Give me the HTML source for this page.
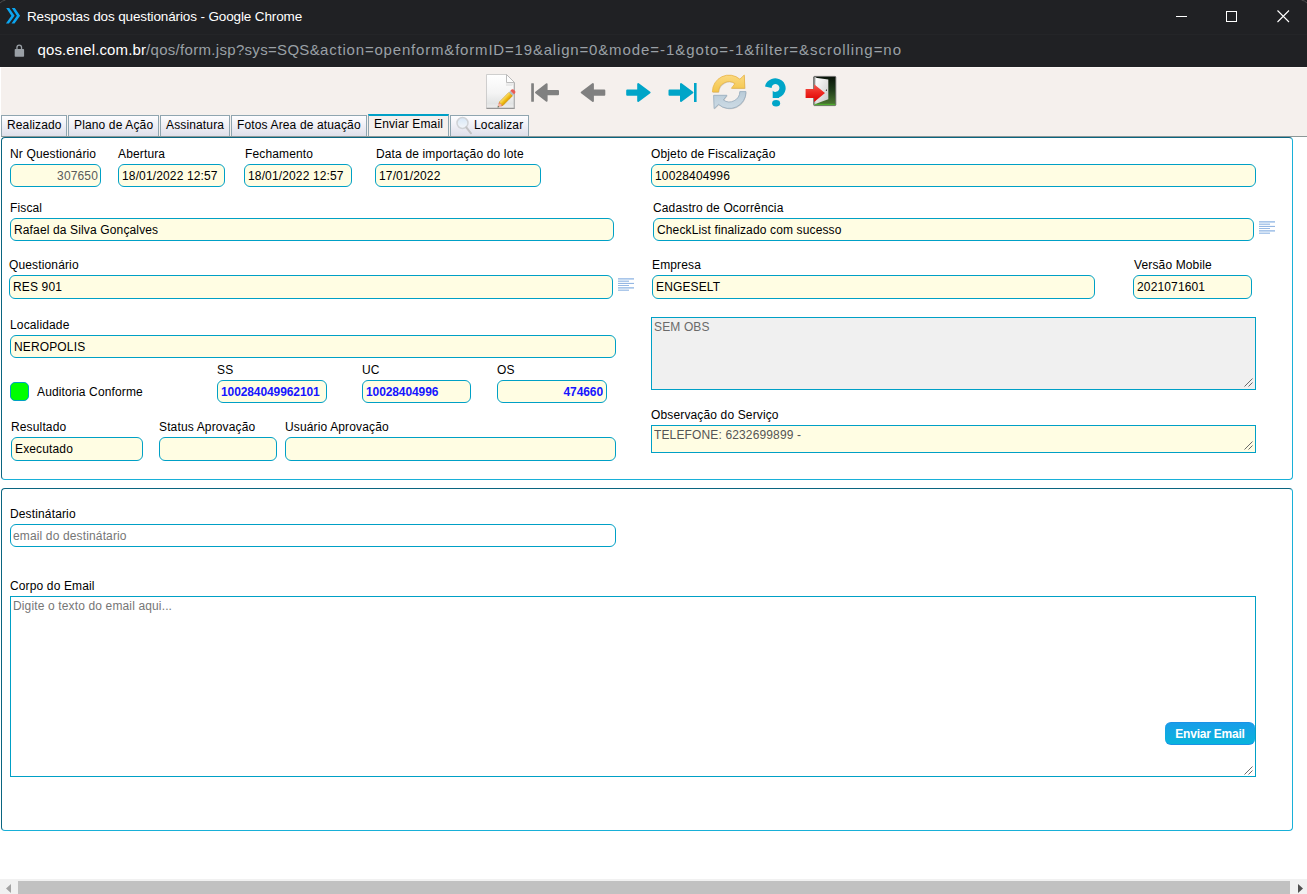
<!DOCTYPE html><html><head><meta charset="utf-8"><style>
*{margin:0;padding:0;box-sizing:border-box}
html,body{width:1307px;height:894px;overflow:hidden;background:#fff;font-family:"Liberation Sans",sans-serif}
.t{position:absolute;white-space:nowrap;line-height:14px;font-size:12px;letter-spacing:0.14px}
.in{position:absolute;border:1px solid #00a0c6;background:#fffde3}
.it{position:absolute;white-space:nowrap;line-height:14px;font-size:12px;overflow:hidden;letter-spacing:0.14px}
.tab{position:absolute;top:115px;height:21px;border:1px solid #8fa5b0;border-bottom:none;background:linear-gradient(#fdfdff,#dfdfea);font-size:12px;line-height:14px;color:#000}
.tab span{position:absolute;top:2px;white-space:nowrap;letter-spacing:0.14px}
</style></head><body>
<div style="position:absolute;left:0;top:0;width:1307px;height:34px;background:#202124"></div>
<div style="position:absolute;left:0;top:34px;width:1307px;height:33px;background:#202124"></div>
<div style="position:absolute;left:0;top:34px;width:1307px;height:1px;background:#242528"></div>
<svg style="position:absolute;left:0;top:0" width="30" height="34"><g fill="#0ba5f0"><path d="M6.2 8.1 H9.2 L14.6 15.7 L8.9 23.6 H5.9 L11.4 15.7 Z"/><path d="M11.8 8.1 H14.8 L20.1 15.7 L14.5 23.6 H11.5 L16.9 15.7 Z"/></g></svg>
<div class="t" style="left:27px;top:9px;font-size:13.5px;line-height:16px;color:#fff;letter-spacing:-0.13px">Respostas dos questionários - Google Chrome</div>
<svg style="position:absolute;left:0;top:0" width="8" height="6"><path d="M0 3 Q2 0.8 5.5 0" fill="none" stroke="#4a4a4c" stroke-width="1"/></svg>
<svg style="position:absolute;left:1299px;top:0" width="8" height="6"><path d="M8 3 Q6 0.8 2.5 0" fill="none" stroke="#4a4a4c" stroke-width="1"/></svg>
<div style="position:absolute;left:1176px;top:16px;width:11px;height:1px;background:#fff"></div>
<div style="position:absolute;left:1226px;top:11px;width:11px;height:11px;border:1px solid #fff"></div>
<svg style="position:absolute;left:1270px;top:4px" width="26" height="26"><path d="M7.5 6.5 L19 18 M19 6.5 L7.5 18" stroke="#fff" stroke-width="1.1"/></svg>
<svg style="position:absolute;left:10px;top:40px" width="20" height="20"><path d="M6.95 9.5 V7.45 A2.3 2.3 0 0 1 11.55 7.45 V9.5" fill="none" stroke="#9aa0a6" stroke-width="1.3"/><rect x="4.7" y="9" width="9.4" height="7.7" rx="0.8" fill="#9aa0a6"/></svg>
<div class="t" style="left:37.5px;top:41px;font-size:15px;line-height:18px;color:#fff;letter-spacing:0.118px">qos.enel.com.br</div>
<div class="t" style="left:146px;top:41px;font-size:15px;line-height:18px;color:#9aa0a6;letter-spacing:0.311px">/qos/form.jsp?sys=SQS&amp;</div>
<div class="t" style="left:320px;top:41px;font-size:15px;line-height:18px;color:#9aa0a6;letter-spacing:0.811px">action=openform&amp;formID=19&amp;align=0&amp;</div>
<div class="t" style="left:609px;top:41px;font-size:15px;line-height:18px;color:#9aa0a6;letter-spacing:0.958px">mode=-1&amp;goto=-1&amp;filter=&amp;scrolling=no</div>
<div style="position:absolute;left:0;top:67px;width:1307px;height:69px;background:#f5f0ed"></div>
<div style="position:absolute;left:0;top:67px;width:1307px;height:1px;background:#fcf8f5"></div>
<div style="position:absolute;left:0;top:67px;width:1px;height:70px;background:#fff"></div>
<div style="position:absolute;left:1px;top:136px;width:1306px;height:1px;background:#8c9797"></div>
<svg style="position:absolute;left:480px;top:70px" width="370" height="45" viewBox="480 70 370 45">
<defs>
<linearGradient id="pg" x1="0" y1="0" x2="0" y2="1"><stop offset="0" stop-color="#ffffff"/><stop offset="0.55" stop-color="#f4f4f4"/><stop offset="0.85" stop-color="#e2e4e4"/><stop offset="1" stop-color="#eeeeee"/></linearGradient>
<linearGradient id="pen" x1="0" y1="0" x2="0" y2="1"><stop offset="0" stop-color="#fbe27a"/><stop offset="0.5" stop-color="#f2c21c"/><stop offset="1" stop-color="#d99a00"/></linearGradient>
<linearGradient id="yl" x1="0" y1="0" x2="0" y2="1"><stop offset="0" stop-color="#fbd980"/><stop offset="1" stop-color="#f3c54a"/></linearGradient>
<linearGradient id="bl" x1="0" y1="0" x2="0" y2="1"><stop offset="0" stop-color="#b9cbd8"/><stop offset="1" stop-color="#cddbe5"/></linearGradient>
<linearGradient id="dr" x1="0" y1="0" x2="0" y2="1"><stop offset="0" stop-color="#081208"/><stop offset="0.45" stop-color="#1e3a1a"/><stop offset="1" stop-color="#4f7d33"/></linearGradient>
<linearGradient id="door" x1="0" y1="0" x2="1" y2="1"><stop offset="0" stop-color="#ffffff"/><stop offset="1" stop-color="#c8c8c8"/></linearGradient>
<linearGradient id="red" x1="0" y1="0" x2="0" y2="1"><stop offset="0" stop-color="#f25a50"/><stop offset="0.45" stop-color="#ee2a22"/><stop offset="1" stop-color="#dc0000"/></linearGradient>
<filter id="sh" x="-20%" y="-20%" width="140%" height="140%"><feGaussianBlur stdDeviation="0.6"/></filter>
</defs>
<!-- doc -->
<path d="M487 75 H507 L515 83 V109 H487 Z" fill="#9a9a9a" opacity="0.55" filter="url(#sh)"/>
<path d="M486.5 74.5 H506.5 L514.5 82.5 V108.5 H486.5 Z" fill="url(#pg)" stroke="#c4c4c4" stroke-width="0.8"/>
<path d="M486.5 108.3 H514.5" stroke="#8c8c8c" stroke-width="1.1"/>
<path d="M514.2 83 V108.5" stroke="#a9a9a9" stroke-width="1"/>
<path d="M506.5 74.5 V82.5 H514.5 Z" fill="#fdfdfd" stroke="#b4b4b4" stroke-width="0.9" stroke-linejoin="round"/>
<path d="M505.8 83.3 H514 L512 86 H506 Z" fill="#e4e4e4" opacity="0.8"/>
<g transform="translate(497.6,107.4) rotate(-45.5)">
<path d="M0 0 L1.6 -1 L1.6 1 Z" fill="#2c4a2c"/>
<path d="M1.4 -1.2 L5 -2.5 V2.5 L1.4 1.2 Z" fill="#f1b4a0"/>
<path d="M3.2 -1.9 L5 -2.5 V-1 Z" fill="#e06050"/>
<path d="M3.2 1.9 L5 2.5 V1 Z" fill="#e06050"/>
<rect x="5" y="-2.5" width="13.8" height="5" fill="url(#pen)" stroke="#cf9200" stroke-width="0.5"/>
<rect x="18.8" y="-2.5" width="2" height="5" fill="#b4bcbc"/>
<path d="M20.8 -2.5 H22.5 Q24 -2.5 24 0 Q24 2.5 22.5 2.5 H20.8 Z" fill="#ea5a52"/>
</g>
<!-- first -->
<rect x="531.2" y="83.2" width="2.7" height="18.6" rx="0.5" fill="#808080"/>
<path d="M536 92.5 L546.6 84.2 V90.9 H558 V94.3 H546.6 V100.8 Z" fill="#808080" stroke="#808080" stroke-width="2" stroke-linejoin="round"/>
<!-- prev -->
<path d="M581.7 92.5 L592.9 84 V90.4 H604.3 V94.7 H592.9 V100.9 Z" fill="#808080" stroke="#808080" stroke-width="2" stroke-linejoin="round"/>
<!-- next -->
<path d="M649.6 92.5 L638.2 84 V90.4 H627.2 V94.7 H638.2 V100.9 Z" fill="#00a5c8" stroke="#00a5c8" stroke-width="2" stroke-linejoin="round"/>
<!-- last -->
<path d="M692.4 92.5 L681 84 V90.4 H669.5 V94.7 H681 V100.9 Z" fill="#00a5c8" stroke="#00a5c8" stroke-width="2" stroke-linejoin="round"/>
<rect x="694" y="83" width="2.6" height="19" fill="#00a5c8"/>
<!-- refresh -->
<g filter="url(#sh)" opacity="0.35"><path d="M712.9 92.8 A16.6 16.6 0 0 1 740.4 80 L744.8 75.8 L745.3 89.1 L731.9 89.1 L735.5 84.4 A10.4 10.4 0 0 0 719.1 92.8 Z" fill="#888"/><path d="M746.5 92.4 A16.6 16.6 0 0 1 719 105.2 L714.6 109.4 L714.1 96.1 L727.5 96.1 L723.9 100.8 A10.4 10.4 0 0 0 740.3 92.4 Z" fill="#888"/></g>
<path d="M712.4 92 A16.6 16.6 0 0 1 739.9 79.2 L744.3 75 L744.8 88.3 L731.4 88.3 L735 83.6 A10.4 10.4 0 0 0 718.6 92 Z" fill="url(#yl)" stroke="#e9b444" stroke-width="0.8" stroke-linejoin="round"/>
<path d="M746 91.6 A16.6 16.6 0 0 1 718.5 104.4 L714.1 108.6 L713.6 95.3 L727 95.3 L723.4 100 A10.4 10.4 0 0 0 739.8 91.6 Z" fill="url(#bl)" stroke="#94aabb" stroke-width="0.8" stroke-linejoin="round"/>
<!-- help -->
<path d="M765 86.5 A10.4 9.9 0 1 1 779 97.4 L779 98.1 L772.7 98.1 L772.7 90.7 A3.9 3.9 0 1 0 771.6 87.9 Z" fill="#00a5c8"/>
<ellipse cx="776.1" cy="103.3" rx="4" ry="3.3" fill="#00a5c8"/>
<!-- exit -->
<rect x="813.7" y="76.4" width="22.1" height="29.2" rx="0.8" fill="url(#dr)" stroke="#6a6a6a" stroke-width="0.9"/>
<rect x="814.2" y="77" width="2" height="28" fill="#a8a8a8"/>
<path d="M814.5 103.8 H835.2 V105.2 H814.5 Z" fill="#4fb02f" opacity="0.9"/>
<path d="M815.5 77.8 L828.3 79.4 L828.3 99.2 L815.3 104.1 Z" fill="url(#door)"/>
<path d="M825.6 90.6 L826.8 89 L827 91 Z" fill="#222"/>
<path d="M805.6 88.9 H814.1 V84.3 L825 93.1 L814.1 102 V98 H805.6 Z" fill="url(#red)"/>
</svg>
<div class="tab" style="left:1px;width:66px"><span style="left:5px">Realizado</span></div>
<div class="tab" style="left:68px;width:91px"><span style="left:5px">Plano de Ação</span></div>
<div class="tab" style="left:160px;width:70px"><span style="left:5px">Assinatura</span></div>
<div class="tab" style="left:231px;width:136px"><span style="left:5px">Fotos Area de atuação</span></div>
<div style="position:absolute;left:368px;top:114px;width:81px;height:22px;background:#f5f0ed;border-left:1px solid #8fa5b0;border-right:1px solid #8fa5b0;border-top:2px solid #00a0c6"></div>
<div class="t" style="left:374px;top:117px">Enviar Email</div>
<div class="tab" style="left:450px;width:79px"><span style="left:23px">Localizar</span></div>
<svg style="position:absolute;left:454px;top:115px" width="20" height="22"><defs><linearGradient id="mg" x1="0" y1="0" x2="0" y2="1"><stop offset="0" stop-color="#d6e6f6"/><stop offset="1" stop-color="#f4f6fa"/></linearGradient></defs><circle cx="8.5" cy="8" r="5.5" fill="url(#mg)" stroke="#cfd2d6" stroke-width="1.5"/><path d="M12.3 12.3 L17 18.3" stroke="#c2c2c4" stroke-width="2" stroke-linecap="round"/></svg>
<div style="position:absolute;left:1px;top:137px;width:1292px;height:343px;border:1px solid;border-color:#0a6580 #18b0d8 #18b0d8 #0a6580;border-radius:4px"></div>
<div style="position:absolute;left:1px;top:488px;width:1292px;height:343px;border:1px solid;border-color:#0a6580 #18b0d8 #18b0d8 #0a6580;border-radius:4px"></div>
<div class="t" style="left:10px;top:147px;font-size:12px;color:#000;">Nr Questionário</div>
<div class="in" style="left:10px;top:164px;width:91px;height:23px;border-radius:6px;"><div class="it" style="color:#5a5a5a;text-align:right;top:4px;left:2px;right:2px">307650</div></div>
<div class="t" style="left:118px;top:147px;font-size:12px;color:#000;">Abertura</div>
<div class="in" style="left:118px;top:164px;width:107px;height:23px;border-radius:6px;"><div class="it" style="color:#000;text-align:left;top:4px;left:3px;right:3px">18/01/2022 12:57</div></div>
<div class="t" style="left:245px;top:147px;font-size:12px;color:#000;">Fechamento</div>
<div class="in" style="left:244px;top:164px;width:108px;height:23px;border-radius:6px;"><div class="it" style="color:#000;text-align:left;top:4px;left:3px;right:3px">18/01/2022 12:57</div></div>
<div class="t" style="left:376px;top:147px;font-size:12px;color:#000;">Data de importação do lote</div>
<div class="in" style="left:375px;top:164px;width:166px;height:23px;border-radius:6px;"><div class="it" style="color:#000;text-align:left;top:4px;left:3px;right:3px">17/01/2022</div></div>
<div class="t" style="left:651px;top:147px;font-size:12px;color:#000;">Objeto de Fiscalização</div>
<div class="in" style="left:651px;top:164px;width:605px;height:23px;border-radius:6px;"><div class="it" style="color:#000;text-align:left;top:4px;left:3px;right:3px">10028404996</div></div>
<div class="t" style="left:10px;top:201px;font-size:12px;color:#000;">Fiscal</div>
<div class="in" style="left:10px;top:218px;width:604px;height:23px;border-radius:6px;"><div class="it" style="color:#000;text-align:left;top:4px;left:3px;right:3px">Rafael da Silva Gonçalves</div></div>
<div class="t" style="left:653px;top:201px;font-size:12px;color:#000;">Cadastro de Ocorrência</div>
<div class="in" style="left:653px;top:218px;width:601px;height:23px;border-radius:6px;"><div class="it" style="color:#000;text-align:left;top:4px;left:3px;right:3px">CheckList finalizado com sucesso</div></div>
<div class="t" style="left:9px;top:258px;font-size:12px;color:#000;">Questionário</div>
<div class="in" style="left:9px;top:275px;width:604px;height:24px;border-radius:6px;"><div class="it" style="color:#000;text-align:left;top:4px;left:3px;right:3px">RES 901</div></div>
<div class="t" style="left:652px;top:258px;font-size:12px;color:#000;">Empresa</div>
<div class="in" style="left:652px;top:275px;width:443px;height:24px;border-radius:6px;"><div class="it" style="color:#000;text-align:left;top:4px;left:3px;right:3px">ENGESELT</div></div>
<div class="t" style="left:1134px;top:258px;font-size:12px;color:#000;">Versão Mobile</div>
<div class="in" style="left:1133px;top:275px;width:119px;height:24px;border-radius:6px;"><div class="it" style="color:#000;text-align:left;top:4px;left:3px;right:3px">2021071601</div></div>
<div class="t" style="left:10px;top:318px;font-size:12px;color:#000;">Localidade</div>
<div class="in" style="left:10px;top:335px;width:606px;height:23px;border-radius:6px;"><div class="it" style="color:#000;text-align:left;top:4px;left:3px;right:3px">NEROPOLIS</div></div>
<div class="in" style="left:651px;top:317px;width:605px;height:73px;border-radius:0px;background:#f0f0f0;"><div class="it" style="color:#6a6a6a;text-align:left;top:2px;left:2px;right:2px">SEM OBS</div></div>
<div style="position:absolute;left:10px;top:382px;width:19px;height:19px;background:#00ff00;border:1px solid #00a0c6;border-radius:5px"></div>
<div class="t" style="left:37px;top:385px;font-size:12px;color:#000;">Auditoria Conforme</div>
<div class="t" style="left:217px;top:363px;font-size:12px;color:#000;">SS</div>
<div class="in" style="left:217px;top:380px;width:110px;height:23px;border-radius:6px;"><div class="it" style="color:#1515ff;text-align:left;font-weight:bold;letter-spacing:-0.1px;top:4px;left:3px;right:3px">100284049962101</div></div>
<div class="t" style="left:362px;top:363px;font-size:12px;color:#000;">UC</div>
<div class="in" style="left:362px;top:380px;width:109px;height:23px;border-radius:6px;"><div class="it" style="color:#1515ff;text-align:left;font-weight:bold;letter-spacing:-0.1px;top:4px;left:3px;right:3px">10028404996</div></div>
<div class="t" style="left:497px;top:363px;font-size:12px;color:#000;">OS</div>
<div class="in" style="left:497px;top:380px;width:110px;height:23px;border-radius:6px;"><div class="it" style="color:#1515ff;text-align:right;font-weight:bold;letter-spacing:-0.1px;top:4px;left:3px;right:3px">474660</div></div>
<div class="t" style="left:11px;top:420px;font-size:12px;color:#000;">Resultado</div>
<div class="in" style="left:11px;top:437px;width:132px;height:24px;border-radius:6px;"><div class="it" style="color:#000;text-align:left;top:4px;left:3px;right:3px">Executado</div></div>
<div class="t" style="left:159px;top:420px;font-size:12px;color:#000;">Status Aprovação</div>
<div class="in" style="left:159px;top:437px;width:118px;height:24px;border-radius:6px;"><div class="it" style="color:#000;text-align:left;top:4px;left:3px;right:3px"></div></div>
<div class="t" style="left:285px;top:420px;font-size:12px;color:#000;">Usuário Aprovação</div>
<div class="in" style="left:285px;top:437px;width:331px;height:24px;border-radius:6px;"><div class="it" style="color:#000;text-align:left;top:4px;left:3px;right:3px"></div></div>
<div class="t" style="left:651px;top:408px;font-size:12px;color:#000;">Observação do Serviço</div>
<div class="in" style="left:651px;top:425px;width:605px;height:28px;border-radius:0px;"><div class="it" style="color:#555;text-align:left;top:2px;left:2px;right:2px">TELEFONE: 6232699899 -</div></div>
<svg style="position:absolute;left:1259px;top:221px" width="17" height="14"><rect x="0" y="0" width="16" height="1.7" fill="#a9c6ea"/><rect x="0" y="1.7" width="11" height="1.1" fill="#d2e2f4"/><rect x="0" y="2.9" width="11" height="1" fill="#a3c2e8"/><rect x="0" y="4.9" width="16" height="1" fill="#8ab0e0"/><rect x="0" y="7" width="11" height="1" fill="#98bae5"/><rect x="0" y="9" width="16" height="1.7" fill="#a9c6ea"/><rect x="0" y="10.7" width="11" height="1.1" fill="#d2e2f4"/><rect x="0" y="11.9" width="11" height="1" fill="#a3c2e8"/></svg>
<svg style="position:absolute;left:618px;top:278px" width="17" height="14"><rect x="0" y="0" width="16" height="1.7" fill="#a9c6ea"/><rect x="0" y="1.7" width="11" height="1.1" fill="#d2e2f4"/><rect x="0" y="2.9" width="11" height="1" fill="#a3c2e8"/><rect x="0" y="4.9" width="16" height="1" fill="#8ab0e0"/><rect x="0" y="7" width="11" height="1" fill="#98bae5"/><rect x="0" y="9" width="16" height="1.7" fill="#a9c6ea"/><rect x="0" y="10.7" width="11" height="1.1" fill="#d2e2f4"/><rect x="0" y="11.9" width="11" height="1" fill="#a3c2e8"/></svg>
<div class="t" style="left:10px;top:507px;font-size:12px;color:#000;">Destinátario</div>
<div class="in" style="left:10px;top:524px;width:606px;height:23px;border-radius:6px;background:#fff;"><div class="it" style="color:#767676;text-align:left;top:4px;left:2px;right:2px">email do destinátario</div></div>
<div class="t" style="left:10px;top:579px;font-size:12px;color:#000;">Corpo do Email</div>
<div class="in" style="left:10px;top:596px;width:1246px;height:181px;border-radius:0px;background:#fff;"><div class="it" style="color:#767676;text-align:left;top:2px;left:2px;right:2px">Digite o texto do email aqui...</div></div>
<div style="position:absolute;left:1165px;top:722px;width:90px;height:23px;border-radius:6px;background:linear-gradient(#199ee9,#08b4dc);border-top:1px solid #1a92e6;border-bottom:1px solid #1a92e6;color:#fff;font-weight:bold;font-size:12px;line-height:22px;text-align:center;letter-spacing:-0.22px">Enviar Email</div>
<svg style="position:absolute;left:1243px;top:377px" width="10" height="10"><path d="M1.5 9.5 L9.5 1.5 M5.5 9.5 L9.5 5.5" stroke="#6a6a6a" stroke-width="1"/></svg>
<svg style="position:absolute;left:1243px;top:440px" width="10" height="10"><path d="M1.5 9.5 L9.5 1.5 M5.5 9.5 L9.5 5.5" stroke="#6a6a6a" stroke-width="1"/></svg>
<svg style="position:absolute;left:1243px;top:765px" width="10" height="10"><path d="M1.5 9.5 L9.5 1.5 M5.5 9.5 L9.5 5.5" stroke="#6a6a6a" stroke-width="1"/></svg>
<div style="position:absolute;left:0;top:879px;width:1307px;height:15px;background:#f1f1f1"></div>
<div style="position:absolute;left:18px;top:881px;width:1272px;height:13px;background:#c1c1c1"></div>
<svg style="position:absolute;left:0;top:879px" width="18" height="15"><path d="M11 5 L6 9.5 L11 14 Z" fill="#a3a3a3"/></svg>
<svg style="position:absolute;left:1290px;top:879px" width="17" height="15"><path d="M8 5 L13 9.5 L8 14 Z" fill="#505050"/></svg>
</body></html>
